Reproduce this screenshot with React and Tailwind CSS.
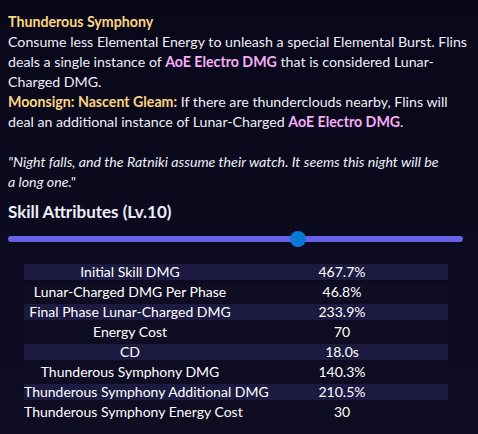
import React from "react";

const rows = [
  ["Initial Skill DMG", "467.7%"],
  ["Lunar-Charged DMG Per Phase", "46.8%"],
  ["Final Phase Lunar-Charged DMG", "233.9%"],
  ["Energy Cost", "70"],
  ["CD", "18.0s"],
  ["Thunderous Symphony DMG", "140.3%"],
  ["Thunderous Symphony Additional DMG", "210.5%"],
  ["Thunderous Symphony Energy Cost", "30"],
];

export default function App() {
  return (
    <div className="w-[478px] h-[434px] overflow-hidden bg-gradient-to-b from-[#09081a] to-[#0f0d22] text-[#efeef7] font-['Lato','Noto_Sans',sans-serif]">
      <div className="px-2 pt-3">
        <p className="text-[14.2px] leading-5">
          <span className="font-bold text-[#fcd581]">Thunderous Symphony</span>
          <br />
          Consume less Elemental Energy to unleash a special Elemental Burst. Flins deals a single instance of{" "}
          <span className="font-bold text-[#f6acf8]">AoE Electro DMG</span> that is considered Lunar-Charged DMG.
          <br />
          <span className="font-bold text-[#fcd581]">Moonsign: Nascent Gleam:</span> If there are thunderclouds
          nearby, Flins will deal an additional instance of Lunar-Charged{" "}
          <span className="font-bold text-[#f6acf8]">AoE Electro DMG</span>.
        </p>

        <p className="mt-5 max-w-[440px] text-[14.2px] leading-5 italic">
          "Night falls, and the Ratniki assume their watch. It seems this night will be a long one."
        </p>

        <h3 className="mt-2 text-[17px] leading-6 font-bold">Skill Attributes (Lv.10)</h3>

        {/* level slider */}
        <div className="relative mt-[7px] h-4 w-[455px] flex items-center">
          <div className="h-[6px] w-full rounded-full bg-[#6862e8]"></div>
          <div className="absolute left-[282px] top-0 h-4 w-4 rounded-full bg-[#0a78d6]"></div>
        </div>

        <table className="mt-[13px] ml-4 w-[424px] table-fixed border-separate border-spacing-x-0 border-spacing-y-1 text-[14px] leading-4 text-white">
          <tbody>
            {rows.map(([name, val], i) => (
              <tr key={name} className={i % 2 === 0 ? "bg-[#1c1a40]" : "bg-[#0f0d22]"}>
                <td className="w-1/2 p-0 text-center whitespace-nowrap">{name}</td>
                <td className="w-1/2 p-0 text-center">{val}</td>
              </tr>
            ))}
          </tbody>
        </table>
      </div>
    </div>
  );
}
